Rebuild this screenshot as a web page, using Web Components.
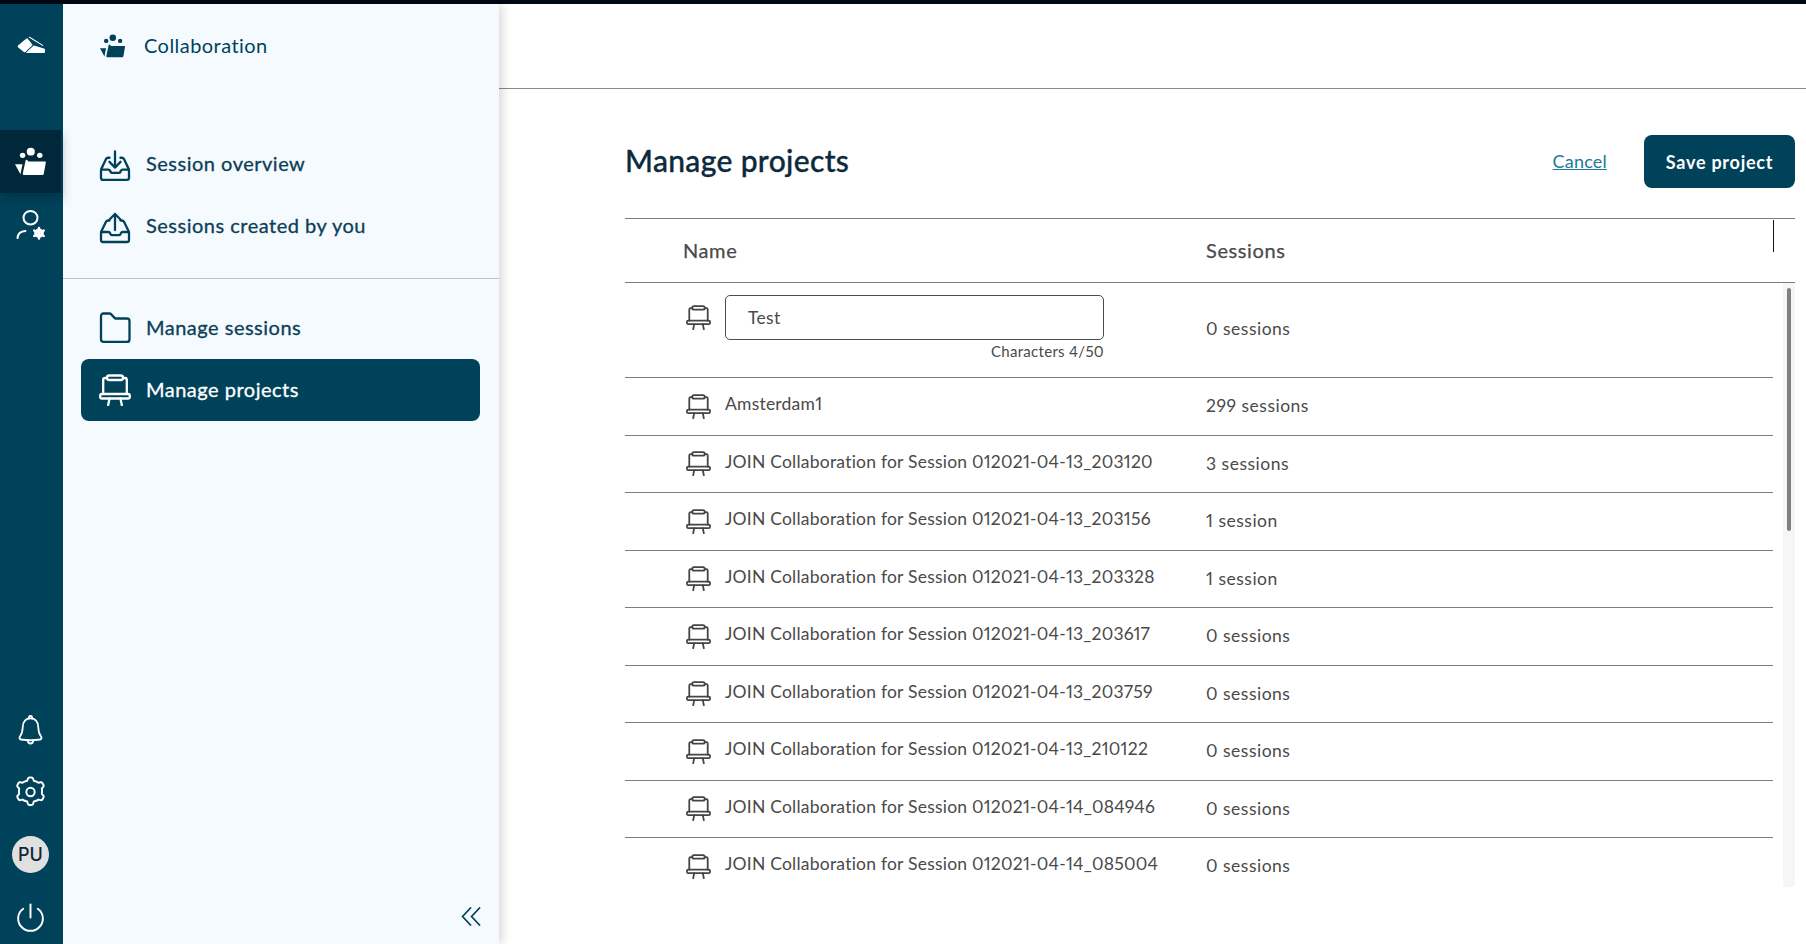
<!DOCTYPE html>
<html lang="en"><head><meta charset="utf-8"><title>Manage projects</title>
<style>
html,body{margin:0;padding:0;width:100%;height:944px;overflow:hidden;background:#fff;font-family:"Lato","Liberation Sans",sans-serif}
</style></head><body>
<app-shell>
  <side-rail slot="rail"></side-rail>
  <side-panel slot="panel">
    <panel-head>Collaboration</panel-head>
    <nav-group slot="top">
      <nav-item icon="inboxDown" low>Session overview</nav-item>
      <nav-item icon="inboxUp" low>Sessions created by you</nav-item>
    </nav-group>
    <nav-group slot="bottom">
      <nav-item icon="folder" tight>Manage sessions</nav-item>
      <nav-item icon="easel" tight active>Manage projects</nav-item>
    </nav-group>
  </side-panel>
  <manage-projects slot="main"></manage-projects>
</app-shell>
<script>
const ICONS={
 logo:'<path fill="currentColor" stroke="none" d="M1 9.6 9.4 2.6q.8-.6 1.4.1l4.4 5.6q.5.7-.1 1.3L8.4 16q-.7.6-1.5.1L1.2 11.4q-.8-.9-.2-1.8Z"/><path fill="currentColor" stroke="none" d="M12.4.6l14 8.6-.5.8L11.8 1.5Z"/><path fill="currentColor" stroke="none" d="M17 9.500 27 12.600q1 .4 1 1.400v2q0 1-1 1H9.600q-.8 0-.3-.6l7-6.600q.3-.4.7-.3Z"/>',
 collab:'<circle cx="13.3" cy="4" r="3.4" fill="currentColor" stroke="none"/><circle cx="6.4" cy="7.2" r="2.3" fill="currentColor" stroke="none"/><circle cx="20.9" cy="7.2" r="2.3" fill="currentColor" stroke="none"/><path fill="currentColor" stroke="none" d="M9 11.500q.6-1 1.200-.2l1 .9q.5.4 1.100.4h13.200q.6 0 .5.700l-1.700 9.800q-.2 1.100-1.300 1.100H7.700q-1.200 0-1.200-1.100Z"/><path fill="currentColor" stroke="none" d="M0 14.800h6.300L4.600 23.500Z"/>',
 userCog:'<circle cx="14.500" cy="9" r="7" fill="none"/><path d="M1.500 30q.4-7 8-7.400" fill="none" stroke-linecap="round"/><g transform="translate(23 25)"><circle r="3.400" fill="none" stroke-width="3"/><path d="M0-5.600V5.600M-4.800-2.800 4.800 2.800M-4.800 2.800 4.800-2.800" stroke-width="2.400"/></g>',
 inboxDown:'<path d="M16 1.500V17M10.500 11.500 16 17l5.500-5.500"/><path d="M10.500 7.500H9.200q-1.500 0-2.200 1.300L2 19M21.500 7.500h1.300q1.500 0 2.200 1.300L30 19"/><path d="M2 20.500q0-1.500 1.500-1.500h6q1 0 1.500 1l.6 1.200q.5 1 1.500 1h6.800q1 0 1.500-1L22 20q.5-1 1.500-1h5q1.500 0 1.500 1.500V27q0 2-2 2H4q-2 0-2-2Z"/>',
 inboxUp:'<path d="M16 18V2M10.500 7.500 16 2l5.500 5.500"/><path d="M10.500 8.500H9.200q-1.500 0-2.200 1.300L2 20M21.500 8.500h1.300q1.500 0 2.200 1.300L30 20"/><path d="M2 21.500q0-1.500 1.500-1.500h6q1 0 1.500 1l.6 1.200q.5 1 1.500 1h6.800q1 0 1.500-1L22 21q.5-1 1.500-1h5q1.500 0 1.500 1.500V28q0 2-2 2H4q-2 0-2-2Z"/>',
 folder:'<path d="M2 4q0-2.500 2.500-2.500h6q1 0 1.800.8l3 3q.6.700 1.700.700h11q2.500 0 2.500 2.500v17q0 2.500-2.500 2.500H4.500Q2 28 2 25.500Z"/>',
 easel:'<rect x="8" y="1.500" width="16" height="4.500" rx="2.200"/><path d="M8 4H6q-1.800 0-1.800 1.800V20M24 4h2q1.800 0 1.800 1.800V20"/><rect x="1.200" y="20" width="29.600" height="4.500" rx="1.800"/><path d="M10.500 24.500 9.200 31M21.500 24.500 22.800 31"/>',
 bell:'<path d="M12.500 3.500q0-2.500 2-2.500t2 2.500"/><path d="M14.500 3.500q-8.500 0-9 9-.2 6-3 9.300-2 2.700 1 3.500 11 1.400 22 0 3-.8 1-3.500-2.800-3.300-3-9.300-.5-9-9-9Z"/><path d="M11 26q.5 3.500 3.500 3.500T18 26"/>',
 gear:'<circle cx="15" cy="16" r="4.300"/><path d="M12.300 2.700q.4-1.200 1.600-1.200h2.200q1.200 0 1.600 1.200l.7 2.100q3.100.7 4.900 2l2.100-.5q1.200-.3 1.900.7l1.100 1.900q.6 1.100-.2 2l-1.500 1.600q.5 2.500 0 5.400l1.500 1.600q.8.900.2 2l-1.100 1.900q-.7 1-1.900.7l-2.100-.5q-1.800 1.300-4.900 2l-.7 2.100q-.4 1.200-1.600 1.200h-2.200q-1.200 0-1.600-1.200l-.7-2.100q-3.100-.7-4.900-2l-2.100.5q-1.200.3-1.900-.7l-1.100-1.900q-.6-1.100.2-2l1.500-1.600q-.5-2.900 0-5.400L1.700 10.900q-.8-.9-.2-2l1.100-1.900q.7-1 1.900-.7l2.100.5q1.800-1.300 4.900-2Z"/>',
 power:'<path d="M14 1.500V15"/><path d="M6.500 6Q1.200 9.500 1.200 16a12.800 12.800 0 0 0 25.600 0q0-6.500-5.300-10"/>',
 chevrons:'<path d="M9.500 1 1.500 9.500l8 8.500M18.500 1l-8 8.500 8 8.500"/>'
};
const VB={logo:'0 0 28 18',collab:'0 0 27 25',userCog:'0 0 30 33',inboxDown:'0 0 32 31',inboxUp:'0 0 32 32',folder:'0 0 32 30',easel:'0 0 32 32',bell:'0 0 29 31',gear:'0 0 30 32',power:'0 0 28 30',chevrons:'0 0 20 19'};
class XIcon extends HTMLElement{
  connectedCallback(){
    const n=this.getAttribute('name'),w=this.getAttribute('w')||32,h=this.getAttribute('h')||32,sw=this.getAttribute('sw')||2;
    this.attachShadow({mode:'open'}).innerHTML=`<style>:host{display:block;flex:none;width:${w}px;height:${h}px;line-height:0}svg{display:block;width:100%;height:100%}</style><svg viewBox="${VB[n]}" preserveAspectRatio="none" fill="none" stroke="currentColor" stroke-width="${sw}" stroke-linecap="round" stroke-linejoin="round">${ICONS[n]}</svg>`;
  }
}
customElements.define('x-icon',XIcon);

class AppShell extends HTMLElement{
  constructor(){super();this.attachShadow({mode:'open'}).innerHTML=`<style>
    :host{display:flex;flex-direction:column;width:1806px;height:944px;overflow:hidden;background:#fff}
    .top{height:4px;flex:none;background:#000814}
    .row{flex:1;display:flex;min-height:0}
    ::slotted([slot=main]){flex:1;min-width:0}
  </style><div class="top"></div><div class="row"><slot name="rail"></slot><slot name="panel"></slot><slot name="main"></slot></div>`;}
}
customElements.define('app-shell',AppShell);

class SideRail extends HTMLElement{
  constructor(){super();this.attachShadow({mode:'open'}).innerHTML=`<style>
    :host{display:flex;flex-direction:column;flex:none;width:63px;height:940px;background:#00425a;color:#fff;position:relative;z-index:3}
    .logo{height:126px;width:61px;flex:none;display:flex;justify-content:center;padding-top:32px;box-sizing:border-box}
    .item{height:63px;width:61px;display:flex;align-items:center;justify-content:center;flex:none}
    .on{background:#00283a;box-shadow:0 6px 10px rgba(0,30,45,.35)}
    .grow{flex:1}
    .bot{display:flex;flex-direction:column;align-items:center;width:61px;gap:30.500px;padding-bottom:11px}
    .bot>*{height:32px;display:flex;align-items:center;justify-content:center}
    .av{width:37px;height:37px;margin:-2.500px 0;border-radius:50%;background:#e0e0e0;color:#10263a;font:500 18px "Inter","Liberation Sans",sans-serif;display:flex;align-items:center;justify-content:center}
  </style>
  <div class="logo"><x-icon name="logo" w="28" h="18"></x-icon></div>
  <div class="item on"><x-icon name="collab" w="32" h="29"></x-icon></div>
  <div class="item"><x-icon name="userCog" w="30" h="32" sw="2"></x-icon></div>
  <div class="grow"></div>
  <div class="bot">
    <div><x-icon name="bell" w="25" h="30" sw="2"></x-icon></div>
    <div><x-icon name="gear" w="29" h="32" sw="2"></x-icon></div>
    <div class="av">PU</div>
    <div><x-icon name="power" w="27" h="29" sw="2"></x-icon></div>
  </div>`;}
}
customElements.define('side-rail',SideRail);

class SidePanel extends HTMLElement{
  constructor(){super();this.attachShadow({mode:'open'}).innerHTML=`<style>
    :host{display:flex;flex-direction:column;flex:none;width:436px;height:940px;background:#f5faff;box-shadow:3px 0 10px rgba(0,0,0,.16);position:relative;z-index:2;box-sizing:border-box}
    .head{height:128px;flex:none}
    .sep{height:1px;background:#b8c4cc;margin:22px 0 18px;flex:none}
    .grow{flex:1}
    .foot{display:flex;justify-content:flex-end;padding:0 18px 18px 0;color:#00425a}
  </style>
  <div class="head"><slot></slot></div>
  <slot name="top"></slot>
  <div class="sep"></div>
  <slot name="bottom"></slot>
  <div class="grow"></div>
  <div class="foot"><x-icon name="chevrons" w="20" h="19" sw="1.800"></x-icon></div>`;}
}
customElements.define('side-panel',SidePanel);

class PanelHead extends HTMLElement{
  constructor(){super();this.attachShadow({mode:'open'}).innerHTML=`<style>
    :host{display:flex;align-items:center;gap:18px;padding:27px 0 0 37px;color:#00425a;font-size:20px;letter-spacing:.45px;line-height:24px}
    x-icon{margin-top:3px}
  </style><x-icon name="collab" w="26" h="24"></x-icon><slot></slot>`;}
}
customElements.define('panel-head',PanelHead);

class NavGroup extends HTMLElement{
  constructor(){super();this.attachShadow({mode:'open'}).innerHTML=`<style>:host{display:flex;flex-direction:column;padding:0 19px 0 18px}</style><slot></slot>`;}
}
customElements.define('nav-group',NavGroup);

class NavItem extends HTMLElement{
  connectedCallback(){
    const on=this.hasAttribute('active');
    this.attachShadow({mode:'open'}).innerHTML=`<style>
      :host{display:flex;align-items:center;gap:15px;height:62px;padding-left:18px;border-radius:8px;font-size:20px;letter-spacing:.5px;-webkit-text-stroke:.3px currentColor;color:${on?'#fff':'#0c3f56'};background:${on?'#00425a':'transparent'}}
      x-icon{color:${on?'#fff':'#00425a'}}
      :host([low]) x-icon{margin-top:6px}
      :host([tight]) span{padding-bottom:2px}
    </style><x-icon name="${this.getAttribute('icon')}" w="32" h="32" sw="2.300"></x-icon><span><slot></slot></span>`;
  }
}
customElements.define('nav-item',NavItem);

class ProjectRow extends HTMLElement{
  connectedCallback(){
    this.attachShadow({mode:'open'}).innerHTML=`<style>
      :host{display:grid;grid-template-columns:581px 1fr;height:57.500px;box-sizing:border-box;border-bottom:1px solid #7d7d7d;align-items:center;flex:none;font-variant-numeric:proportional-nums}
      .n{display:flex;align-items:center;gap:14px;padding:0 0 5px 61px;font-size:17.500px;letter-spacing:.22px;color:#4a4a4a;white-space:nowrap}
      .n x-icon{color:#444;margin-top:5px}
      .s{font-size:17.500px;letter-spacing:.5px;color:#4a4a4a;padding-bottom:1px}
    </style><div class="n"><x-icon name="easel" w="25" h="25" sw="2.300"></x-icon><slot></slot></div><div class="s">${this.getAttribute('sessions')}</div>`;
  }
}
customElements.define('project-row',ProjectRow);

class EditRow extends HTMLElement{
  constructor(){super();this.attachShadow({mode:'open'}).innerHTML=`<style>
    :host{display:grid;grid-template-columns:581px 1fr;height:95px;box-sizing:border-box;border-bottom:1px solid #7d7d7d;flex:none;color:#4a4a4a;font-variant-numeric:proportional-nums}
    .n{display:flex;gap:14px;padding:12px 0 0 61px}
    x-icon{color:#444;margin-top:10px}
    .f{width:379px}
    .i{height:45px;box-sizing:border-box;border:1px solid #4c4c4c;border-radius:5px;background:#fff;display:flex;align-items:center;padding:0 0 1px 22px;font-size:17.500px;letter-spacing:.3px}
    .c{text-align:right;font-size:15px;letter-spacing:.3px;line-height:20px;margin-top:1px}
    .s{align-self:center;font-size:17.500px;letter-spacing:.5px;padding-bottom:3px}
  </style><div class="n"><x-icon name="easel" w="25" h="25" sw="2.300"></x-icon><div class="f"><div class="i">Test</div><div class="c">Characters 4/50</div></div></div><div class="s">0 sessions</div>`;}
}
customElements.define('edit-row',EditRow);

class ManageProjects extends HTMLElement{
  constructor(){super();
    const names=[['Amsterdam1','299 sessions'],['JOIN Collaboration for Session 012021-04-13_203120','3 sessions'],['JOIN Collaboration for Session 012021-04-13_203156','1 session'],['JOIN Collaboration for Session 012021-04-13_203328','1 session'],['JOIN Collaboration for Session 012021-04-13_203617','0 sessions'],['JOIN Collaboration for Session 012021-04-13_203759','0 sessions'],['JOIN Collaboration for Session 012021-04-13_210122','0 sessions'],['JOIN Collaboration for Session 012021-04-14_084946','0 sessions'],['JOIN Collaboration for Session 012021-04-14_085004','0 sessions']];
    this.attachShadow({mode:'open'}).innerHTML=`<style>
      :host{display:flex;flex-direction:column;height:940px;color:#4a4a4a}
      .bar{height:85px;flex:none;box-sizing:border-box;border-bottom:1px solid #8a8a8a}
      .wrap{flex:1;display:flex;flex-direction:column;padding:0 11px 57px 126px;min-height:0}
      .title{display:flex;align-items:center;height:129px;padding-top:16px;box-sizing:border-box;flex:none}
      h1{margin:0 0 3px;flex:1;font-size:30px;font-weight:500;letter-spacing:.35px;color:#0c2a3c;-webkit-text-stroke:.35px currentColor}
      a{color:#1c7a9a;font-size:18px;text-decoration:underline;letter-spacing:.2px;margin-right:37px;padding-bottom:2px}
      button{width:151px;height:53px;border:0;border-radius:8px;background:#00425a;color:#fff;font:700 18px "Lato","Liberation Sans",sans-serif;letter-spacing:.75px}
      .th{display:grid;grid-template-columns:58px 523px 1fr 22px;height:65px;box-sizing:border-box;border-top:1px solid #7d7d7d;border-bottom:1px solid #7d7d7d;align-items:center;font-size:20px;letter-spacing:.6px;-webkit-text-stroke:.25px currentColor;flex:none}
      .th span{padding-bottom:2px}
      .th .rz{padding:0;height:32px;align-self:start;margin-top:1px;border-left:1px solid #111;-webkit-text-stroke:0}
      .body{flex:1;display:flex;min-height:0;overflow:hidden}
      .list{flex:none;width:1148px;display:flex;flex-direction:column;overflow:hidden}
      .track{flex:none;width:12px;margin-left:10px;background:#f6f6f6;border-radius:0 0 3px 3px;padding:5px 0 0 4px;box-sizing:border-box}
      .thumb{width:4px;height:243px;background:#808080;border-radius:2px}
    </style>
    <div class="bar"></div>
    <div class="wrap">
      <div class="title"><h1>Manage projects</h1><a href="#">Cancel</a><button>Save project</button></div>
      <div class="th"><span></span><span>Name</span><span>Sessions</span><span class="rz"></span></div>
      <div class="body"><div class="list"><edit-row></edit-row>${names.map(([a,b])=>`<project-row sessions="${b}">${a}</project-row>`).join('')}</div><div class="track"><div class="thumb"></div></div></div>
    </div>`;}
}
customElements.define('manage-projects',ManageProjects);
</script>
</body></html>
